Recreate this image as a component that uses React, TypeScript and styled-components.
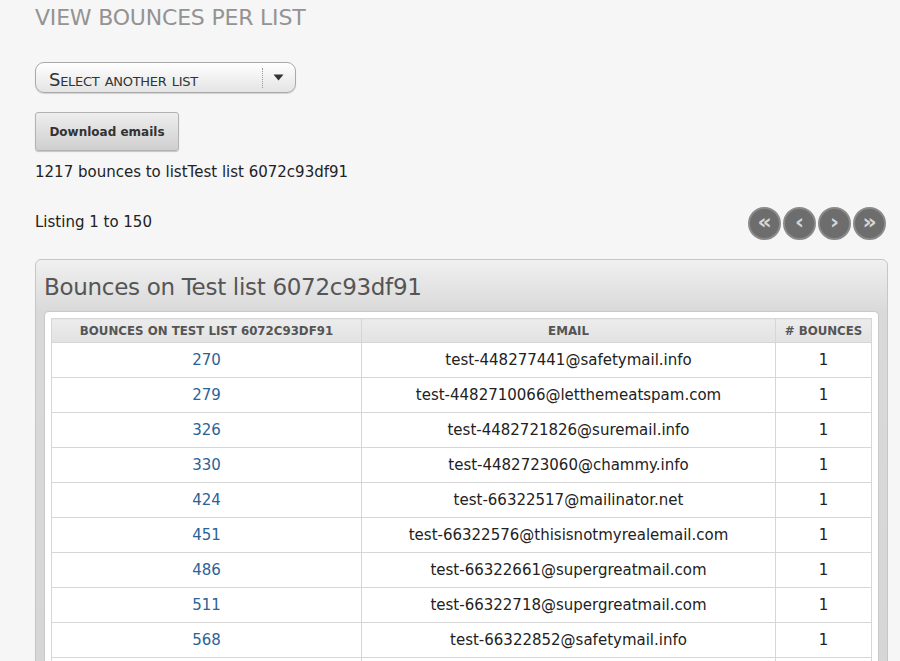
import React from "react";
import styled, { createGlobalStyle } from "styled-components";

const GlobalStyle = createGlobalStyle`
  html, body {
    margin: 0;
    padding: 0;
    background: #f6f6f6;
    font-family: "DejaVu Sans", Verdana, sans-serif;
    color: #222;
    overflow: hidden;
  }
`;

const bounces = [
    { id: 270, email: "test-448277441@safetymail.info", count: 1 },
    { id: 279, email: "test-4482710066@letthemeatspam.com", count: 1 },
    { id: 326, email: "test-4482721826@suremail.info", count: 1 },
    { id: 330, email: "test-4482723060@chammy.info", count: 1 },
    { id: 424, email: "test-66322517@mailinator.net", count: 1 },
    { id: 451, email: "test-66322576@thisisnotmyrealemail.com", count: 1 },
    { id: 486, email: "test-66322661@supergreatmail.com", count: 1 },
    { id: 511, email: "test-66322718@supergreatmail.com", count: 1 },
    { id: 568, email: "test-66322852@safetymail.info", count: 1 },
];

export default () => {
    return <Page>
        <GlobalStyle/>
        <Title>VIEW BOUNCES PER LIST</Title>
        <Select>
            <SelectLabel>Select another list</SelectLabel>
            <SelectArrow>
                <svg width="11" height="7" viewBox="0 0 11 7">
                    <path d="M0.5 0.5H10.5L5.5 6.5Z" fill="#333"/>
                </svg>
            </SelectArrow>
        </Select>
        <DownloadButton>Download emails</DownloadButton>
        <Summary>1217 bounces to listTest list 6072c93df91</Summary>
        <ListingBar>
            <ListingText>Listing 1 to 150</ListingText>
            <Pager>
                <PageButton>«</PageButton>
                <PageButton>‹</PageButton>
                <PageButton>›</PageButton>
                <PageButton>»</PageButton>
            </Pager>
        </ListingBar>
        <Panel>
            <PanelTitle>Bounces on Test list 6072c93df91</PanelTitle>
            <PanelBody>
                <Table>
                    <colgroup>
                        <col style={{ width: 310 }}/>
                        <col style={{ width: 414 }}/>
                        <col/>
                    </colgroup>
                    <thead>
                    <tr>
                        <Th>Bounces on Test list 6072c93df91</Th>
                        <Th>Email</Th>
                        <Th># Bounces</Th>
                    </tr>
                    </thead>
                    <tbody>
                    {bounces.map(row => (
                        <tr key={row.id}>
                            <Td><IdLink href="#">{row.id}</IdLink></Td>
                            <Td>{row.email}</Td>
                            <Td>{row.count}</Td>
                        </tr>
                    ))}
                    <tr>
                        <Td/>
                        <Td/>
                        <Td/>
                    </tr>
                    </tbody>
                </Table>
            </PanelBody>
        </Panel>
    </Page>
}

const Page = styled.div`
    padding: 4px 12px 0 35px;
    height: 661px;
    box-sizing: border-box;
`;

const Title = styled.h1`
    margin: 0;
    font-size: 22px;
    font-weight: normal;
    line-height: 28px;
    color: #939393;
    letter-spacing: -0.2px;
`;

const Select = styled.div`
    margin-top: 30px;
    width: 261px;
    height: 31px;
    box-sizing: border-box;
    display: flex;
    align-items: center;
    border: 1px solid #a9a9a9;
    border-radius: 9px;
    background: linear-gradient(#ffffff, #e4e4e4);
    box-shadow: inset 0 1px 0 #fff, 0 1px 1px rgba(0, 0, 0, 0.15);
`;

const SelectLabel = styled.span`
    flex: 1;
    padding-left: 13px;
    padding-top: 3px;
    font-size: 18px;
    font-variant: small-caps;
    color: #333;
    letter-spacing: -0.3px;
`;

const SelectArrow = styled.span`
    display: flex;
    align-items: center;
    justify-content: center;
    width: 31px;
    height: 20px;
    border-left: 1px dotted #999;
    margin-right: 1px;
`;

const DownloadButton = styled.button`
    display: block;
    margin-top: 19px;
    width: 144px;
    height: 39px;
    border: 1px solid #b3b3b3;
    border-radius: 3px;
    background: linear-gradient(#eeeeee, #cfcfcf);
    box-shadow: 0 1px 1px rgba(0, 0, 0, 0.2);
    font-family: "DejaVu Sans", Verdana, sans-serif;
    font-size: 12px;
    font-weight: bold;
    color: #333;
    padding: 0;
`;

const Summary = styled.p`
    margin: 12px 0 0;
    font-size: 15px;
    line-height: 18px;
`;

const ListingBar = styled.div`
    margin-top: 26px;
    display: flex;
    justify-content: space-between;
    align-items: center;
    font-size: 15px;
    line-height: 18px;
`;

const ListingText = styled.span`
    margin-bottom: 4px;
`;

const Pager = styled.div`
    display: flex;
    gap: 2px;
    margin-right: 2px;
`;

const PageButton = styled.span`
    width: 33px;
    height: 33px;
    box-sizing: border-box;
    border-radius: 50%;
    background: #6d6d6d;
    border: 2px solid #8a8a8a;
    color: #d6d6d6;
    display: flex;
    align-items: center;
    justify-content: center;
    font-size: 22px;
    font-weight: bold;
    line-height: 1;
    padding-bottom: 3px;
`;

const Panel = styled.section`
    margin-top: 19px;
    border: 1px solid #c6c6c6;
    border-radius: 6px 6px 0 0;
    background: linear-gradient(#f0f0f0, #d9d9d9 52px, #d6d6d6);
    padding: 0 8px 0 8px;
`;

const PanelTitle = styled.h2`
    margin: 0;
    height: 51px;
    display: flex;
    align-items: center;
    padding-top: 2px;
    box-sizing: border-box;
    font-size: 23px;
    font-weight: normal;
    color: #555;
    letter-spacing: -0.3px;
`;

const PanelBody = styled.div`
    background: #fff;
    border-radius: 5px 5px 0 0;
    border: 1px solid #c9c9c9;
    border-bottom: none;
    padding: 6px 6px 0;
`;

const Table = styled.table`
    width: 100%;
    border-collapse: collapse;
    table-layout: fixed;
    border: 1px solid #d6d6d6;
`;

const Th = styled.th`
    height: 23px;
    padding: 0;
    background: linear-gradient(#ececec, #e2e2e2);
    border: 1px solid #d6d6d6;
    font-size: 11.8px;
    font-weight: bold;
    text-transform: uppercase;
    color: #555;
    text-align: center;
`;

const Td = styled.td`
    height: 34px;
    padding: 0;
    border: 1px solid #d6d6d6;
    font-size: 15px;
    text-align: center;
    color: #222;
`;

const IdLink = styled.a`
    color: #2a6399;
    text-decoration: none;
`;
